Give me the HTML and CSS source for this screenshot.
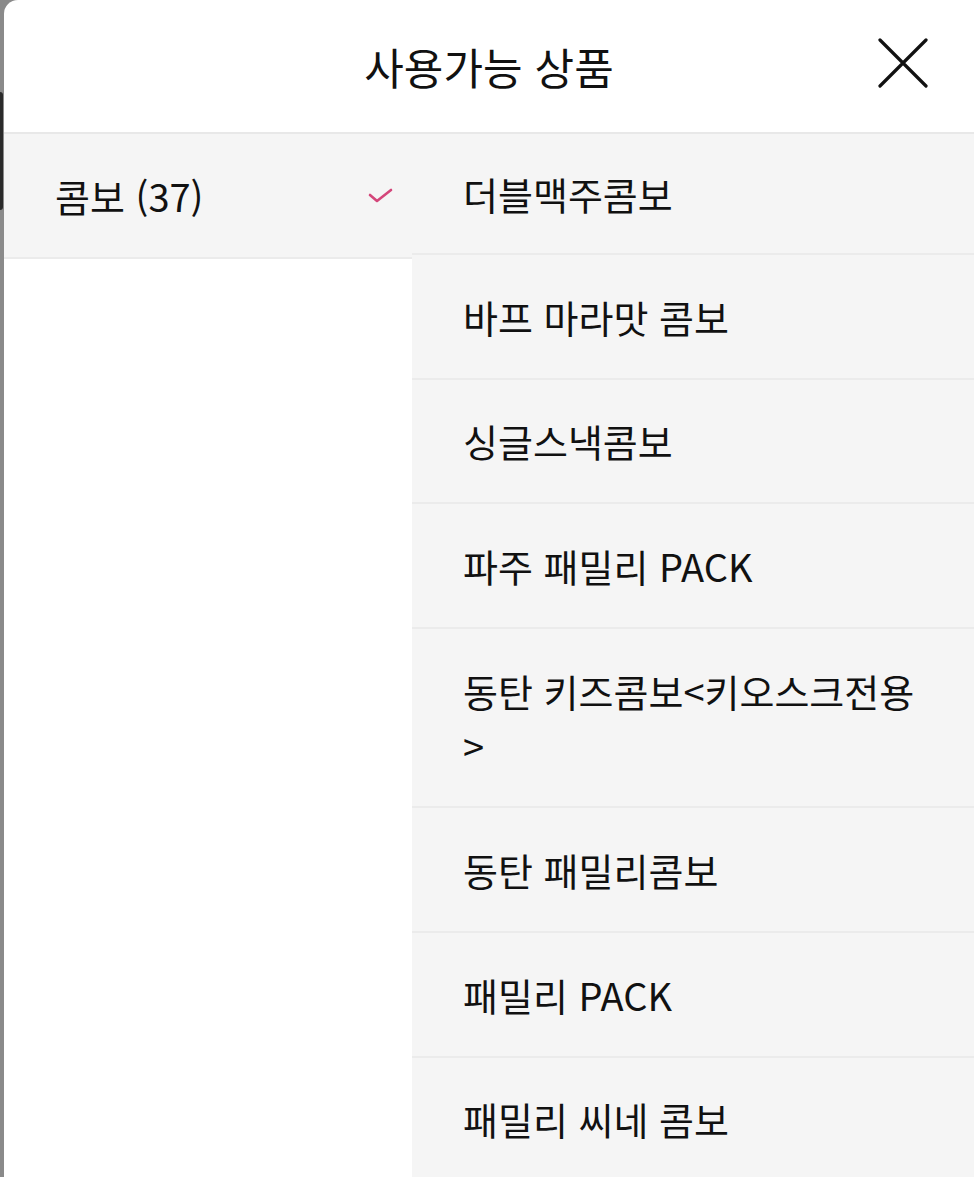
FILE: index.html
```html
<!DOCTYPE html>
<html lang="ko">
<head>
    <meta charset="UTF-8">
    <meta name="viewport" content="width=device-width, initial-scale=1.0">
    <title>사용가능 상품</title>
    <link rel="stylesheet" href="styles.css">
</head>
<body>
    <div class="backdrop">
        <span class="backdrop-bar"></span>
    </div>
    <div class="sheet">
        <div class="sheet-header">
            <h1 class="sheet-title">사용가능 상품</h1>
            <button class="close-btn" aria-label="닫기">
                <svg width="50" height="50" viewBox="0 0 50 50">
                    <path d="M2 2 L48 48 M48 2 L2 48" stroke="#111" stroke-width="3.2" stroke-linecap="round" fill="none"/>
                </svg>
            </button>
        </div>
        <div class="sheet-body">
            <ul class="category-list">
                <li class="category selected">
                    <span>콤보 (37)</span>
                    <svg class="check" width="26" height="20" viewBox="0 0 26 20">
                        <path d="M2 8 L9 14 L23 3" stroke="#d4467a" stroke-width="2.6" fill="none" stroke-linecap="round" stroke-linejoin="round"/>
                    </svg>
                </li>
            </ul>
            <ul class="product-list">
                <li class="product">더블맥주콤보</li>
                <li class="product">바프 마라맛 콤보</li>
                <li class="product">싱글스낵콤보</li>
                <li class="product">파주 패밀리 PACK</li>
                <li class="product">동탄 키즈콤보&lt;키오스크전용&gt;</li>
                <li class="product">동탄 패밀리콤보</li>
                <li class="product">패밀리 PACK</li>
                <li class="product">패밀리 씨네 콤보</li>
            </ul>
        </div>
    </div>
</body>
</html>
```

FILE: styles.css
```css
body {
    margin: 0;
    display: flex;
    height: 100vh;
    overflow: hidden;
    background-color: #8a8a8a;
    font-family: "Noto Sans CJK KR", "Noto Sans", sans-serif;
    color: #111;
}
.backdrop {
    width: 4px;
    flex-shrink: 0;
    padding-top: 92px;
}
.backdrop-bar {
    display: block;
    width: 3px;
    height: 118px;
    background-color: #2a2a2a;
    border-radius: 0 3px 3px 0;
}
.sheet {
    flex: 1;
    display: flex;
    flex-direction: column;
    background-color: #fff;
    border-top-left-radius: 14px;
    overflow: hidden;
}
.sheet-header {
    position: relative;
    height: 134px;
    display: flex;
    justify-content: center;
    align-items: center;
    border-bottom: 2px solid #e8e8e8;
    box-sizing: border-box;
    flex-shrink: 0;
}
.sheet-title {
    margin: 0;
    font-size: 43px;
    font-weight: 400;
}
.close-btn {
    position: absolute;
    top: 38px;
    right: 46px;
    padding: 0;
    border: none;
    background: none;
    line-height: 0;
    cursor: pointer;
}
.sheet-body {
    flex: 1;
    display: flex;
}
.category-list, .product-list {
    list-style: none;
    margin: 0;
    padding: 0;
}
.category-list {
    width: 408px;
    flex-shrink: 0;
}
.category {
    display: flex;
    justify-content: space-between;
    align-items: center;
    height: 125px;
    padding: 0 18px 0 51px;
    box-sizing: border-box;
    font-size: 38px;
    border-bottom: 2px solid #ebebeb;
}
.category.selected {
    background-color: #f5f5f5;
}
.check {
    margin-top: 2px;
}
.product-list {
    flex: 1;
    background-color: #f5f5f5;
}
.product {
    padding: 33.8px 50px 33.8px 51px;
    font-size: 38px;
    line-height: 55px;
    border-bottom: 2px solid #ebebeb;
}
.product:first-child {
    padding-top: 32px;
    padding-bottom: 32px;
}
```
